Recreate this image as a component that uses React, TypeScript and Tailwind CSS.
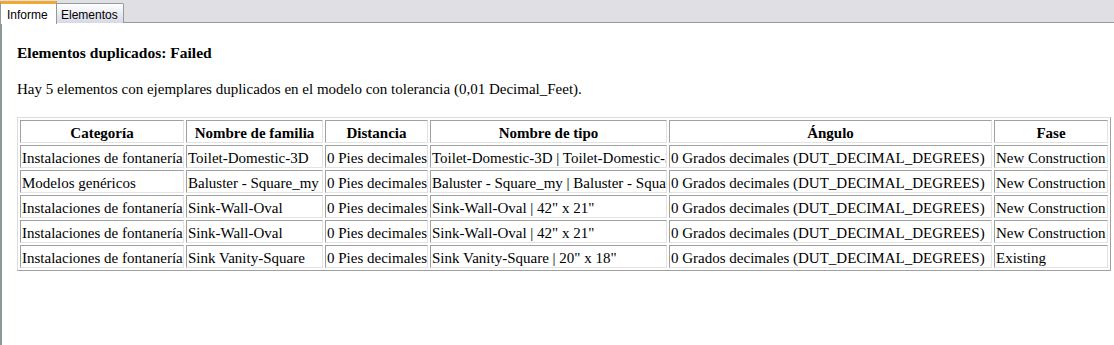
import React from 'react';

const COLS = [
  { name: 'Categoría', w: 164 },
  { name: 'Nombre de familia', w: 137 },
  { name: 'Distancia', w: 103 },
  { name: 'Nombre de tipo', w: 237 },
  { name: 'Ángulo', w: 323 },
  { name: 'Fase', w: 114 },
];

const ANG = '0 Grados decimales (DUT_DECIMAL_DEGREES)';
const DIST = '0 Pies decimales';

const ROWS: string[][] = [
  ['Instalaciones de fontanería', 'Toilet-Domestic-3D', DIST, 'Toilet-Domestic-3D | Toilet-Domestic-3D', ANG, 'New Construction'],
  ['Modelos genéricos', 'Baluster - Square_my', DIST, 'Baluster - Square_my | Baluster - Square_my', ANG, 'New Construction'],
  ['Instalaciones de fontanería', 'Sink-Wall-Oval', DIST, 'Sink-Wall-Oval | 42" x 21"', ANG, 'New Construction'],
  ['Instalaciones de fontanería', 'Sink-Wall-Oval', DIST, 'Sink-Wall-Oval | 42" x 21"', ANG, 'New Construction'],
  ['Instalaciones de fontanería', 'Sink Vanity-Square', DIST, 'Sink Vanity-Square | 20" x 18"', ANG, 'Existing'],
];

// IE-style inset cell: dark top/left, light bottom/right
const cell =
  'h-[23px] px-[1px] pt-[3px] pb-0 align-top overflow-hidden whitespace-nowrap border border-t-[#a0a0a0] border-l-[#a0a0a0] border-b-[#e3e3e3] border-r-[#e3e3e3] leading-[18px]';

const Tabs: React.FC = () => (
  <div className="flex h-[23px] items-end bg-[#e0dfe3] font-['Liberation_Sans',Arial,sans-serif] text-[12px] text-black">
    <div className="relative z-10 -mb-px flex h-[23px] w-[57px] items-start border-l border-r border-[#919b9c] border-t-[3px] border-t-[#f0a830] bg-white pl-[6px] pt-[2px]">
      Informe
    </div>
    <div className="flex h-[20px] w-[67px] items-start rounded-tr-[2px] border-t border-r border-[#919b9c] bg-gradient-to-b from-white to-[#d8d8e6] pl-[4px] pt-[2px]">
      Elementos
    </div>
    <div className="h-px flex-1 self-end bg-[#919b9c]" />
  </div>
);

const App: React.FC = () => {
  return (
    <div className="h-[345px] w-[1114px] overflow-hidden bg-white">
      <Tabs />
      <div className="h-[322px] border-l-2 border-[#8d9698] bg-white pl-[15px] font-['Liberation_Serif','Times_New_Roman',serif] text-[15px] text-black">
        <div className="pt-[20px] text-[15.5px] font-bold leading-[19px]">Elementos duplicados: Failed</div>
        <p className="mt-[18px] leading-[19px]">
          Hay 5 elementos con ejemplares duplicados en el modelo con tolerancia (0,01 Decimal_Feet).
        </p>
        <table className="mt-[18px] w-[1094px] table-fixed border-separate border-spacing-[2px] border border-t-[#dcdcdc] border-l-[#dcdcdc] border-b-[#a0a0a0] border-r-[#a0a0a0]">
          <colgroup>
            {COLS.map((c) => (
              <col key={c.name} style={{ width: c.w }} />
            ))}
          </colgroup>
          <thead>
            <tr>
              {COLS.map((c) => (
                <th key={c.name} className={`${cell} text-center font-bold`}>
                  {c.name}
                </th>
              ))}
            </tr>
          </thead>
          <tbody>
            {ROWS.map((r, i) => (
              <tr key={i}>
                {r.map((v, j) => (
                  <td key={j} className={`${cell} text-left`}>
                    {v}
                  </td>
                ))}
              </tr>
            ))}
          </tbody>
        </table>
      </div>
    </div>
  );
};

export default App;
